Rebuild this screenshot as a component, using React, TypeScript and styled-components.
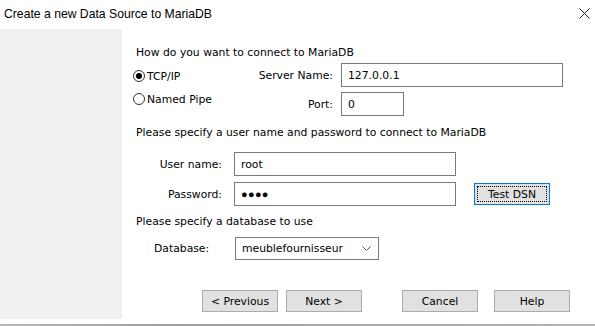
import React from 'react';
import styled, {createGlobalStyle} from 'styled-components';

const GlobalStyle = createGlobalStyle`
  html, body {
    margin: 0;
    padding: 0;
    background: #ffffff;
  }
  body {
    font-family: 'DejaVu Sans', Tahoma, sans-serif;
    font-size: 10.8px;
    color: #000000;
  }
`;

const Window = styled.div`
  width: 595px;
  height: 326px;
  display: flex;
  flex-direction: column;
  background: #ffffff;
  overflow: hidden;
`;

const TitleBar = styled.div`
  height: 29px;
  display: flex;
  align-items: center;
  justify-content: space-between;
  padding: 0 4px 0 4px;
  box-sizing: border-box;
`;

const Title = styled.span`
  font-family: 'Liberation Sans', Arial, sans-serif;
  font-size: 12.2px;
  margin-top: -2px;
`;

const Close = styled.span`
  display: flex;
  margin-right: 1px;
  margin-top: -3px;
`;

const Body = styled.div`
  flex: 1;
  display: flex;
  align-items: flex-start;
`;

const Sidebar = styled.div`
  width: 122px;
  height: 290px;
  background: #f0f0f0;
`;

const Content = styled.div`
  flex: 1;
  display: flex;
  flex-direction: column;
  padding-left: 11px;
`;

const SectionLabel = styled.div<{$top: number}>`
  line-height: 14px;
  padding-left: 3px;
  margin-top: ${p => p.$top}px;
`;

const ConnectBlock = styled.div`
  display: flex;
  margin-top: 3px;
`;

const RadioGroup = styled.div`
  width: 77px;
  display: flex;
  flex-direction: column;
  gap: 7px;
  padding-top: 5px;
`;

const RadioRow = styled.label`
  display: flex;
  align-items: center;
  height: 16px;
  gap: 2px;
  white-space: nowrap;
`;

const RadioCircle = styled.span<{$checked?: boolean}>`
  flex: none;
  width: 12px;
  height: 12px;
  border: 1px solid #333333;
  border-radius: 50%;
  box-sizing: border-box;
  display: flex;
  align-items: center;
  justify-content: center;
  background: #ffffff;

  &::after {
    content: '';
    width: 6px;
    height: 6px;
    border-radius: 50%;
    background: ${p => (p.$checked ? '#000000' : 'transparent')};
  }
`;

const FieldGrid = styled.div`
  display: grid;
  grid-template-columns: 123px auto;
  column-gap: 8px;
  row-gap: 5px;
  align-items: center;
`;

const FieldRow = styled.div<{$top: number}>`
  display: flex;
  align-items: center;
  margin-top: ${p => p.$top}px;
`;

const FieldLabel = styled.span<{$width: number; $align?: string; $indent?: number}>`
  width: ${p => p.$width}px;
  text-align: ${p => p.$align || 'right'};
  padding-left: ${p => p.$indent || 0}px;
  box-sizing: border-box;
  white-space: nowrap;
`;

const TextBox = styled.div<{$width: number; $height?: number}>`
  width: ${p => p.$width}px;
  height: ${p => p.$height || 24}px;
  border: 1px solid #7a7a7a;
  box-sizing: border-box;
  display: flex;
  align-items: center;
  padding-left: 6px;
  background: #ffffff;
`;

const Dots = styled.span`
  font-family: 'Liberation Sans', Arial, sans-serif;
  font-size: 11px;
  letter-spacing: 0.3px;
`;

const Select = styled(TextBox)`
  justify-content: space-between;
  padding-right: 7px;
`;

const Button = styled.div<{$focused?: boolean}>`
  width: 76px;
  height: 22px;
  box-sizing: border-box;
  border: 1px solid ${p => (p.$focused ? '#0078d7' : '#adadad')};
  background: #e1e1e1;
  display: flex;
  align-items: center;
  justify-content: center;
  outline: ${p => (p.$focused ? '1px dotted #000000' : 'none')};
  outline-offset: -4px;
`;

const ButtonBar = styled.div`
  display: flex;
  margin-top: 30px;
  margin-left: 69px;
`;

const Spacer = styled.span<{$w: number}>`
  flex: none;
  width: ${p => p.$w}px;
`;

const BottomStrip = styled.div`
  height: 2px;
  background: linear-gradient(90deg, #b8b8b8 0%, #9c9c9c 30%, #a8a8a8 60%, #b4b4b4 100%);
`;

export default function App() {
  return (
    <Window>
      <GlobalStyle />
      <TitleBar>
        <Title>Create a new Data Source to MariaDB</Title>
        <Close>
          <svg width="11" height="11" viewBox="0 0 11 11">
            <path d="M0.5 0.5 L10.5 10.5 M10.5 0.5 L0.5 10.5" stroke="#222" strokeWidth="1" />
          </svg>
        </Close>
      </TitleBar>
      <Body>
        <Sidebar />
        <Content>
          <SectionLabel $top={17}>How do you want to connect to MariaDB</SectionLabel>
          <ConnectBlock>
            <RadioGroup>
              <RadioRow>
                <RadioCircle $checked />
                TCP/IP
              </RadioRow>
              <RadioRow>
                <RadioCircle />
                Named Pipe
              </RadioRow>
            </RadioGroup>
            <FieldGrid>
              <FieldLabel $width={123}>Server Name:</FieldLabel>
              <TextBox $width={222}>127.0.0.1</TextBox>
              <FieldLabel $width={123}>Port:</FieldLabel>
              <TextBox $width={63}>0</TextBox>
            </FieldGrid>
          </ConnectBlock>

          <SectionLabel $top={10}>
            Please specify a user name and password to connect to MariaDB
          </SectionLabel>
          <FieldRow $top={12}>
            <FieldLabel $width={89}>User name:</FieldLabel>
            <Spacer $w={12} />
            <TextBox $width={222}>root</TextBox>
          </FieldRow>
          <FieldRow $top={6}>
            <FieldLabel $width={89}>Password:</FieldLabel>
            <Spacer $w={12} />
            <TextBox $width={222}>
              <Dots>●●●●</Dots>
            </TextBox>
            <Spacer $w={18} />
            <Button $focused>Test DSN</Button>
          </FieldRow>

          <SectionLabel $top={9}>Please specify a database to use</SectionLabel>
          <FieldRow $top={8}>
            <FieldLabel $width={102} $align="left" $indent={21}>
              Database:
            </FieldLabel>
            <Select $width={144} $height={23}>
              meublefournisseur
              <svg width="9" height="5" viewBox="0 0 9 5">
                <path d="M0.5 0.5 L4.5 4.5 L8.5 0.5" stroke="#555" fill="none" strokeWidth="1" />
              </svg>
            </Select>
          </FieldRow>

          <ButtonBar>
            <Button>&lt; Previous</Button>
            <Spacer $w={8} />
            <Button>Next &gt;</Button>
            <Spacer $w={40} />
            <Button>Cancel</Button>
            <Spacer $w={16} />
            <Button>Help</Button>
          </ButtonBar>
        </Content>
      </Body>
      <BottomStrip />
    </Window>
  );
}
